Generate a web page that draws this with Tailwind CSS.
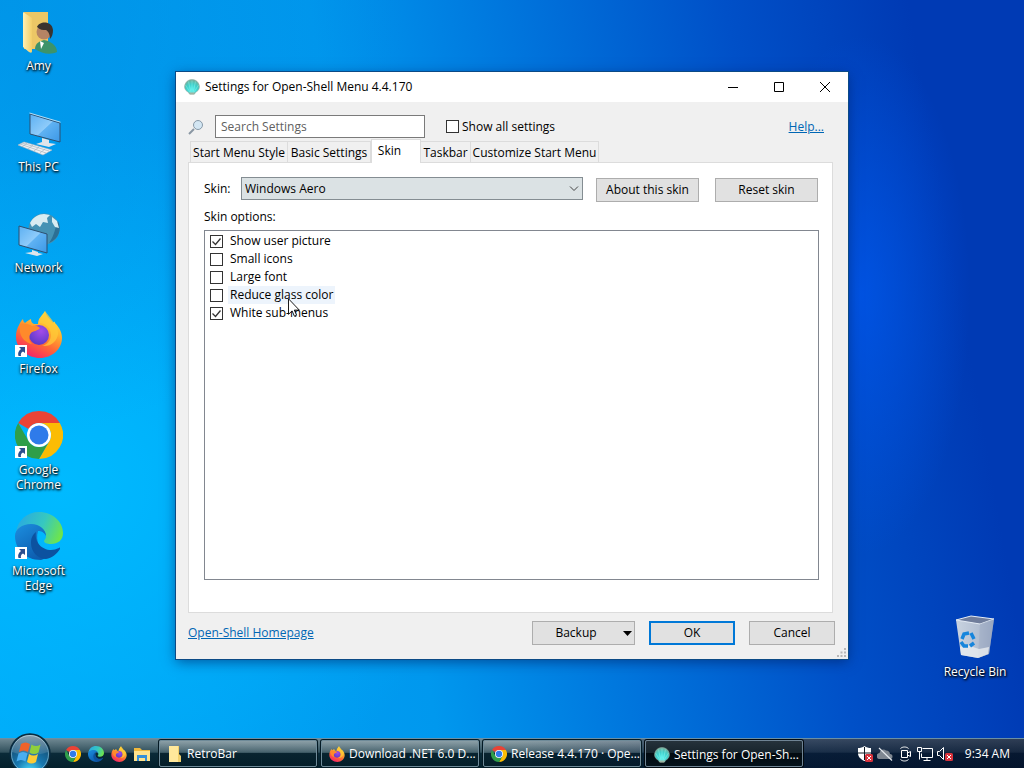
<!DOCTYPE html>
<html lang="en">
<head>
    <meta charset="UTF-8">
    <meta name="viewport" content="width=device-width, initial-scale=1.0">
    <title>Settings for Open-Shell Menu</title>
    <script src="https://cdn.jsdelivr.net/npm/@tailwindcss/browser@4"></script>
</head>
<body class="h-screen flex flex-col overflow-hidden font-['Open_Sans','Noto_Sans',sans-serif] text-[12px] leading-4 text-black">

    <!-- Shared icons -->
    <svg class="absolute size-0" aria-hidden="true">
        <defs>
            <linearGradient id="ffBody" x1=".8" y1="0" x2=".3" y2="1"><stop offset="0" stop-color="#fff04a"/><stop offset=".35" stop-color="#ffb52e"/><stop offset=".65" stop-color="#ff6a35"/><stop offset="1" stop-color="#f5206a"/></linearGradient>
            <radialGradient id="ffCore" cx=".6" cy=".3" r=".8"><stop offset="0" stop-color="#a44bea"/><stop offset="1" stop-color="#5238c4"/></radialGradient>
            <linearGradient id="edgeTop" x1="0" y1=".3" x2="1" y2=".6"><stop offset="0" stop-color="#29a9e2"/><stop offset=".55" stop-color="#36c8c0"/><stop offset="1" stop-color="#6fe54a"/></linearGradient>
            <linearGradient id="edgeLeft" x1="0" y1="0" x2=".6" y2="1"><stop offset="0" stop-color="#1c8fe0"/><stop offset="1" stop-color="#0d5cae"/></linearGradient>
            <linearGradient id="screen" x1="0" y1="0" x2="1" y2="1"><stop offset="0" stop-color="#5cb0f2"/><stop offset=".5" stop-color="#8ecbfa"/><stop offset=".52" stop-color="#5fb2f3"/><stop offset="1" stop-color="#3c98e6"/></linearGradient>
            <linearGradient id="folder" x1="0" y1="0" x2="1" y2="0"><stop offset="0" stop-color="#fff0b4"/><stop offset="1" stop-color="#f3ce67"/></linearGradient>
            <radialGradient id="shellFill" cx=".5" cy=".7" r=".65"><stop offset="0" stop-color="#4ff0ee"/><stop offset=".6" stop-color="#3fcfca"/><stop offset="1" stop-color="#6fb5a2"/></radialGradient>
            <radialGradient id="orb" cx=".5" cy=".95" r=".9"><stop offset="0" stop-color="#4fe0ff"/><stop offset=".4" stop-color="#1878b0"/><stop offset="1" stop-color="#123f5e"/></radialGradient>
            <linearGradient id="gloss" x1="0" y1="0" x2="0" y2="1"><stop offset="0" stop-color="#fff" stop-opacity=".85"/><stop offset="1" stop-color="#fff" stop-opacity=".15"/></linearGradient>
            <linearGradient id="bin" x1="0" y1="0" x2="1" y2="0"><stop offset="0" stop-color="#c9d3e0"/><stop offset=".6" stop-color="#b3bfd2"/><stop offset="1" stop-color="#8e9dba"/></linearGradient>
        </defs>
        <symbol id="chrome" viewBox="0 0 48 48">
            <path fill="#ea4335" d="M24 0A24 24 0 0 1 44.800 12H24a12 12 0 0 0-10.400 6L3.200 12A24 24 0 0 1 24 0z"/>
            <path fill="#fbbc04" d="M44.800 12A24 24 0 0 1 24 48l10.400-18A12 12 0 0 0 34.400 18 12 12 0 0 0 24 12z"/>
            <path fill="#2f9e4a" d="M24 48A24 24 0 0 1 3.200 12l10.400 18A12 12 0 0 0 24 36a12 12 0 0 0 10.400-6z"/>
            <circle cx="24" cy="24" r="12" fill="#fff"/><circle cx="24" cy="24" r="9.500" fill="#2f7bea"/>
        </symbol>
        <symbol id="firefox" viewBox="0 0 48 48">
            <path fill="url(#ffBody)" d="M30 1c1 5 5 8 8 12 1-2 2-1 2 0 4 4 7 9 7 15 0 11-10 20-22 20S1 39 1 27c0-7 2-10 4-14 1-2 2-3 3-4 0 2 1 3 2 4 2-2 4-3 6-4 0 3 1 4 3 5h4C23 8 27 6 30 1z"/>
            <path fill="#ffc938" d="M24 13c7 0 12 5 12 12 0 5-4 10-9 11 9 1 15-5 16-12C44 17 36 9 30 1c-1 5-5 7-6 12z" opacity=".75"/>
            <circle cx="24" cy="25" r="10" fill="url(#ffCore)"/>
            <path fill="#ff8a2b" d="M5 14c4-1 9 0 12 2 3-1 6 0 8 2-2 3-7 3-9 5-3 4-2 8 1 11-6-1-11-6-12-12z"/>
        </symbol>
        <symbol id="edge" viewBox="0 0 48 48">
            <path fill="url(#edgeTop)" d="M1 20C3 8 12 0 24 0c14 0 24 10 24 21 0 7-5 11-12 11-4 0-7-1-7-3 0-1 2-2 2-5 0-6-6-10-13-10C10 14 4 16 1 20z"/>
            <path fill="url(#edgeLeft)" d="M0 24c0-7 7-12 16-12 9 0 15 6 15 12-2-4-5-5-8-5-3 10 2 20 10 25-2 2-4 3-7 4C10 48 0 37 0 24z"/>
            <path fill="#0c52a0" d="M21 20c-4 3-5 7-5 11 0 9 7 16 15 16 6-1 11-5 14-10 0-1 0-2-1-1-3 1-5 2-8 2-9 0-17-8-15-18z"/>
        </symbol>
        <symbol id="shell" viewBox="0 0 16 16">
            <path fill="url(#shellFill)" stroke="#93aaa0" stroke-width=".6" d="M8 .6c3 0 5 1.400 6.300 3.400 1.600 2.600 1.500 5.500-.3 7.500l-2.500 2-1 1.500h-5l-1-1.500-2.500-2C.2 9.500.1 6.600 1.700 4 3 2 5 .6 8 .6z"/>
            <path fill="none" stroke="#a5f5ea" stroke-width=".4" d="M8 14V1.500M7 14L4.500 2.500M9 14l2.500-11.500M6.500 14L1.500 6M9.500 14l5-8"/>
            <path fill="#9fb5a4" d="M5 13.500h6l-.8 1.900H5.800z"/>
        </symbol>
        <symbol id="shortcut" viewBox="0 0 12 12">
            <path fill="#fff" d="M0 0h12v12H0z"/><path fill="#2c4f8f" d="M4 2h6v6L8 6.500C6 7.500 5.500 9 6 11H3.500C2.500 8 3.500 6 6 4z"/>
        </symbol>
    </svg>

    <main class="relative flex-1 flex justify-between text-white bg-[radial-gradient(ellipse_110px_260px_at_84%_40%,#0058f0b3,transparent),radial-gradient(ellipse_40%_60%_at_0%_0%,#0088dc80,transparent),radial-gradient(ellipse_40%_50%_at_6%_66%,#00baff,transparent),linear-gradient(80deg,#00a8f8_0%,#0098ee_38%,#0074dc_56%,#0050c8_74%,#003ab4_90%)]">

        <!-- Desktop icons -->
        <nav class="flex flex-col [text-shadow:1px_1px_2px_#000,0_1px_3px_#000]">
            <a href="#" class="flex h-[101px] w-[77px] flex-col items-center gap-[3px] pt-[7px] text-center leading-[15px]">
                <svg class="size-12" viewBox="0 0 48 48">
                    <path fill="#ecc766" d="M9 5h24v37H9z"/><path fill="url(#folder)" d="M8 5l9 6v33c0 2-1 2-3 1l-6-5z"/>
                    <path fill="#3d936a" d="M20 42c0-6 5-8 9-9 6 1 13 5 13 12-6 3-15 2-22-3z"/><path fill="#fff" d="M25 34l4 2-3 6z"/>
                    <circle cx="29" cy="25" r="7.500" fill="#b58464"/><path fill="#3a332f" d="M22 20c2-6 15-7 16 3 0 4-1 7-3 9 0-5-2-8-4-9-3 0-6 0-9-3z"/>
                </svg>
                <span>Amy</span>
            </a>
            <a href="#" class="flex h-[101px] w-[77px] flex-col items-center gap-[3px] pt-[7px] text-center leading-[15px]">
                <svg class="size-12" viewBox="0 0 48 48">
                    <path fill="url(#screen)" stroke="#2d4f70" d="M15 6l30 9v19L15 26z"/><path fill="none" stroke="#e4eff7" stroke-width=".8" d="M14.500 5l31 9.200"/>
                    <path fill="#dfe5ea" d="M27 30l7 2v3l7 1-7 3-13-3 6-2z"/><path fill="#eef2f5" stroke="#aab4be" stroke-width=".6" d="M9 34l28 8-9 5L3 37z"/>
                    <path fill="none" stroke="#a8b3bd" stroke-width=".7" d="M7 35l27 8M5 36l26 9M12 35l-5 4M18 37l-5 4M24 39l-5 4M30 41l-5 4"/>
                </svg>
                <span>This PC</span>
            </a>
            <a href="#" class="flex h-[101px] w-[77px] flex-col items-center gap-[3px] pt-[7px] text-center leading-[15px]">
                <svg class="size-12" viewBox="0 0 48 48">
                    <circle cx="29" cy="20" r="15.500" fill="#4592b4"/><path fill="#2c6f94" d="M34 34c10-4 13-14 9-22-3 6-3 14-9 22z"/>
                    <path fill="#d8ecf2" d="M15 14c3-6 9-9 14-9l6 1-3 3 1 5-5-1-3 5-4-3-4 3zM37 8l5 4 2 7-4-1-3-5z"/>
                    <path fill="url(#screen)" stroke="#2d4f70" d="M4 17l28 8v19L4 36z"/><path fill="#dfe5ea" d="M17 41l6 2v1l5 1-6 2-12-3 7-1z"/>
                </svg>
                <span>Network</span>
            </a>
            <a href="#" class="relative flex h-[101px] w-[77px] flex-col items-center gap-[3px] pt-[7px] text-center leading-[15px]">
                <svg class="size-12"><use href="#firefox"/></svg>
                <svg class="absolute left-[15px] top-[42px] size-3"><use href="#shortcut"/></svg>
                <span>Firefox</span>
            </a>
            <a href="#" class="relative flex h-[101px] w-[77px] flex-col items-center gap-[3px] pt-[7px] text-center leading-[15px]">
                <svg class="size-12"><use href="#chrome"/></svg>
                <svg class="absolute left-[15px] top-[42px] size-3"><use href="#shortcut"/></svg>
                <span>Google Chrome</span>
            </a>
            <a href="#" class="relative flex h-[101px] w-[77px] flex-col items-center gap-[3px] pt-[7px] text-center leading-[15px]">
                <svg class="size-12"><use href="#edge"/></svg>
                <svg class="absolute left-[15px] top-[42px] size-3"><use href="#shortcut"/></svg>
                <span>Microsoft Edge</span>
            </a>
        </nav>

        <a href="#" class="mr-[11px] mb-[31px] flex h-[101px] w-[76px] flex-col items-center gap-[3px] self-end whitespace-nowrap pt-[7px] text-center leading-[15px] [text-shadow:1px_1px_2px_#000,0_1px_3px_#000]">
            <svg class="size-12" viewBox="0 0 48 48">
                <path fill="url(#bin)" d="M5 7l24 3 14-4-5 35-11 4-17-3z"/><path fill="#707d9b" stroke="#e6edf6" d="M5 7l15-4 23 3-14 5z"/>
                <path fill="#a0adc4" d="M29 11l14-5-5 35-11 4z" opacity=".6"/><path fill="#e8ecf0" d="M9 34l7-2 12 4 10-2-1 7-10 4-17-3z" opacity=".8"/>
                <path fill="none" stroke="#1685dc" stroke-width="3.500" d="M11 26l2-5 5-1M20 20l3 6M10 29l3 4h4M19 33l4-3"/>
            </svg>
            <span>Recycle Bin</span>
        </a>

        <!-- Settings window -->
        <section class="absolute inset-x-[176px] top-[72px] bottom-[79px] flex flex-col bg-[#f0f0f0] text-black shadow-[0_0_0_1px_#0b4a86,0_3px_12px_#00206099]">
            <header class="flex h-[30px] items-center gap-[5px] bg-white pl-2">
                <svg class="size-4"><use href="#shell"/></svg>
                <h1 class="flex-1">Settings for Open-Shell Menu 4.4.170</h1>
                <button type="button" aria-label="Minimize" class="grid h-full w-[46px] place-items-center"><svg class="size-3" viewBox="0 0 12 12"><path stroke="#000" d="M1 6.500h10"/></svg></button>
                <button type="button" aria-label="Maximize" class="-ml-[5px] grid h-full w-[46px] place-items-center"><svg class="size-3" viewBox="0 0 12 12"><path fill="none" stroke="#000" d="M1.500 1.500h9v9h-9z"/></svg></button>
                <button type="button" aria-label="Close" class="-ml-[5px] grid h-full w-[46px] place-items-center"><svg class="size-3" viewBox="0 0 12 12"><path stroke="#000" d="M1 1l10 10M11 1L1 11"/></svg></button>
            </header>

            <form class="flex flex-1 flex-col px-3 pt-[13px]">
                <div class="flex h-[23px] items-center">
                    <svg class="size-4" viewBox="0 0 16 16"><path stroke="#8a97a3" stroke-width="2" d="M1 15l5-5"/><circle cx="10" cy="6" r="4.500" fill="#d3e6f3" stroke="#8799a8"/></svg>
                    <input type="text" aria-label="Search Settings" placeholder="Search Settings" class="ml-[11px] h-[23px] w-[210px] border border-[#7a7a7a] bg-white px-[5px] outline-none placeholder:text-[#606060]">
                    <label class="ml-[21px] flex items-center gap-[3px]">
                        <input type="checkbox" class="size-[13px] appearance-none border border-[#333] bg-white checked:bg-[#333]">
                        Show all settings
                    </label>
                    <a href="#" class="mr-3 ml-auto text-[#0066b4] underline">Help...</a>
                </div>

                <div class="mt-[2px] flex h-[22px] items-end pl-[2px]" role="tablist">
                    <button type="button" role="tab" class="h-[21px] w-[98px] whitespace-nowrap border border-b-0 border-[#dcdcdc] pt-px">Start Menu Style</button>
                    <button type="button" role="tab" class="h-[21px] w-[83px] whitespace-nowrap border border-b-0 border-l-0 border-[#dcdcdc] pt-px">Basic Settings</button>
                    <button type="button" role="tab" aria-selected="true" class="z-10 -mb-px h-6 w-[50px] border border-b-0 border-[#dcdcdc] bg-white pr-[13px] pb-px">Skin</button>
                    <button type="button" role="tab" class="h-[21px] w-[50px] whitespace-nowrap border border-b-0 border-l-0 border-[#dcdcdc] pt-px">Taskbar</button>
                    <button type="button" role="tab" class="h-[21px] w-[128px] whitespace-nowrap border border-b-0 border-l-0 border-[#dcdcdc] pt-px">Customize Start Menu</button>
                </div>

                <div class="mr-[3px] flex flex-1 flex-col border border-[#dcdcdc] bg-white px-[14px] pt-[14px] pb-8">
                    <div class="flex h-[25px] items-start pl-px">
                        <label for="skin" class="w-[37px] leading-6">Skin:</label>
                        <div class="relative mr-[13px] flex-1">
                            <select id="skin" class="block h-[23px] w-full appearance-none border border-[#848d92] bg-[#dbe2e4] px-[3px]">
                                <option>Windows Aero</option>
                            </select>
                            <svg class="pointer-events-none absolute top-2 right-1 h-2 w-[10px]" viewBox="0 0 10 8"><path fill="none" stroke="#444" d="M1 1.500l4 4 4-4"/></svg>
                        </div>
                        <button type="button" class="mt-px mr-4 h-6 w-[103px] border border-[#adadad] bg-[#e1e1e1]">About this skin</button>
                        <button type="button" class="mt-px h-6 w-[103px] border border-[#adadad] bg-[#e1e1e1]">Reset skin</button>
                    </div>
                    <h2 class="mt-[7px] mb-[5px] pl-px">Skin options:</h2>
                    <div class="ml-px -mr-px flex-1 border border-[#828790] bg-white py-px pl-[5px]">
                        <label class="flex h-[18px] items-center">
                            <span class="relative size-[13px]"><input type="checkbox" checked class="peer block size-[13px] appearance-none border border-[#333] bg-white"><svg class="pointer-events-none absolute inset-0 hidden size-[13px] peer-checked:block" viewBox="0 0 13 13"><path fill="none" stroke="#333" stroke-width="1.300" d="M2.500 6.500l3 3 5-6"/></svg></span>
                            <span class="ml-[5px] px-[2px]">Show user picture</span>
                        </label>
                        <label class="flex h-[18px] items-center">
                            <span class="relative size-[13px]"><input type="checkbox" class="peer block size-[13px] appearance-none border border-[#333] bg-white"><svg class="pointer-events-none absolute inset-0 hidden size-[13px] peer-checked:block" viewBox="0 0 13 13"><path fill="none" stroke="#333" stroke-width="1.300" d="M2.500 6.500l3 3 5-6"/></svg></span>
                            <span class="ml-[5px] px-[2px]">Small icons</span>
                        </label>
                        <label class="flex h-[18px] items-center">
                            <span class="relative size-[13px]"><input type="checkbox" class="peer block size-[13px] appearance-none border border-[#333] bg-white"><svg class="pointer-events-none absolute inset-0 hidden size-[13px] peer-checked:block" viewBox="0 0 13 13"><path fill="none" stroke="#333" stroke-width="1.300" d="M2.500 6.500l3 3 5-6"/></svg></span>
                            <span class="ml-[5px] px-[2px]">Large font</span>
                        </label>
                        <label class="flex h-[18px] items-center">
                            <span class="relative size-[13px]"><input type="checkbox" class="peer block size-[13px] appearance-none border border-[#333] bg-white"><svg class="pointer-events-none absolute inset-0 hidden size-[13px] peer-checked:block" viewBox="0 0 13 13"><path fill="none" stroke="#333" stroke-width="1.300" d="M2.500 6.500l3 3 5-6"/></svg></span>
                            <span class="ml-[5px] bg-[#edf4fc] px-[2px] py-px">Reduce glass color</span>
                        </label>
                        <label class="flex h-[18px] items-center">
                            <span class="relative size-[13px]"><input type="checkbox" checked class="peer block size-[13px] appearance-none border border-[#333] bg-white"><svg class="pointer-events-none absolute inset-0 hidden size-[13px] peer-checked:block" viewBox="0 0 13 13"><path fill="none" stroke="#333" stroke-width="1.300" d="M2.500 6.500l3 3 5-6"/></svg></span>
                            <span class="ml-[5px] px-[2px]">White sub-menus</span>
                        </label>
                    </div>
                </div>

                <footer class="flex items-center gap-[14px] pt-2 pr-px pb-[14px]">
                    <a href="#" class="mr-auto text-[#0066b4] underline">Open-Shell Homepage</a>
                    <button type="button" class="flex h-6 w-[103px] items-center border border-[#adadad] bg-[#e1e1e1] pr-[2px]">
                        <span class="flex-1 pr-1">Backup</span>
                        <svg class="h-[5px] w-[9px]" viewBox="0 0 9 5"><path d="M0 0h9L4.500 5z"/></svg>
                    </button>
                    <button type="submit" class="h-6 w-[86px] border-2 border-[#0078d7] bg-[#e1e1e1]">OK</button>
                    <button type="button" class="h-6 w-[86px] border border-[#adadad] bg-[#e1e1e1]">Cancel</button>
                </footer>
            </form>
            <svg class="absolute right-[2px] bottom-[2px] size-[9px] fill-[#b8b8b8]" viewBox="0 0 9 9"><path d="M7 0h2v2H7zM7 3.500h2v2H7zM7 7h2v2H7zM3.500 3.500h2v2h-2zM3.500 7h2v2h-2zM0 7h2v2H0z"/></svg>
        </section>

        <!-- Mouse pointer -->
        <svg class="absolute top-[298px] left-[288px] h-[19px] w-3" viewBox="0 0 12 19"><path fill="#fff" stroke="#000" stroke-width=".9" d="M.5.8v15.500l3.600-3.400 2.300 5.300 2.200-1-2.300-5.100h5z"/></svg>
    </main>

    <!-- Taskbar -->
    <footer class="relative flex h-[30px] items-center border-t border-[#6a8fa4] bg-[linear-gradient(#6e8791,#31505c_45%,#0a2a38_50%,#04202c)] pl-[9px] text-white">
        <div class="absolute inset-0 bg-[linear-gradient(90deg,transparent_50%,#06123a80_75%,#040c2c99)]"></div>
        <button type="button" aria-label="Start" class="relative size-[42px] shrink-0">
            <svg class="size-[42px]" viewBox="0 0 42 42">
                <circle cx="21" cy="21" r="20" fill="url(#orb)" stroke="#0a2b3e" stroke-width="1.500"/><circle cx="21" cy="21" r="18.500" fill="none" stroke="#9ac6d8" stroke-opacity=".6"/>
                <path fill="url(#gloss)" d="M3 19C4 8 12 2 21 2s17 6 18 17c-10 4-26 4-36 0z" opacity=".6"/>
                <path fill="#f0622a" d="M12 11c3-2 6-2 9 0l-2 8c-3-2-6-2-9 0z"/><path fill="#8fcf3c" d="M22.500 11.500c3 2 6 2 9 0l-2 8c-3 2-6 2-9 0z"/>
                <path fill="#4aaef0" d="M9.500 20.500c3-2 6-2 9 0l-2 8c-3-2-6-2-9 0z"/><path fill="#fdcb35" d="M20 21c3 2 6 2 9 0l-2 8c-3 2-6 2-9 0z"/>
            </svg>
        </button>
        <div class="relative ml-[14px] flex gap-[7px]">
            <a href="#" aria-label="Chrome"><svg class="size-4"><use href="#chrome"/></svg></a>
            <a href="#" aria-label="Edge"><svg class="size-4"><use href="#edge"/></svg></a>
            <a href="#" aria-label="Firefox"><svg class="size-4"><use href="#firefox"/></svg></a>
            <a href="#" aria-label="File Explorer"><svg class="size-4" viewBox="0 0 16 16"><path fill="#f0b93d" d="M0 2h6l2 2h8v11H0z"/><path fill="#ffe38c" d="M0 5h16v10H0z"/><path fill="#3590d8" d="M3 15V9h10v6h-2v-3H5v3z"/></svg></a>
        </div>
        <div class="relative ml-[9px] flex gap-1">
            <button type="button" class="flex h-[27px] w-[158px] items-center gap-1 rounded-[2px] border border-[#6f8b99] bg-[linear-gradient(#ffffff40,#ffffff1a_48%,#00000026_50%,#0000001a)] pl-[7px] shadow-[0_0_0_1px_#041a24]">
                <svg class="size-4 shrink-0" viewBox="0 0 16 16"><path fill="#f1d06c" d="M2 0h10v8l2 2v6H2z"/><path fill="#ffe89b" d="M2 0h9v16H2z"/></svg>
                <span>RetroBar</span>
            </button>
            <button type="button" class="flex h-[27px] w-[158px] items-center gap-1 rounded-[2px] border border-[#6f8b99] bg-[linear-gradient(#ffffff40,#ffffff1a_48%,#00000026_50%,#0000001a)] pl-[7px] shadow-[0_0_0_1px_#041a24]">
                <svg class="size-4 shrink-0"><use href="#firefox"/></svg>
                <span class="whitespace-nowrap">Download .NET 6.0 D...</span>
            </button>
            <button type="button" class="flex h-[27px] w-[158px] items-center gap-1 rounded-[2px] border border-[#6f8b99] bg-[linear-gradient(#ffffff40,#ffffff1a_48%,#00000026_50%,#0000001a)] pl-[7px] shadow-[0_0_0_1px_#041a24]">
                <svg class="size-4 shrink-0"><use href="#chrome"/></svg>
                <span class="whitespace-nowrap">Release 4.4.170 · Ope...</span>
            </button>
            <button type="button" class="flex h-[27px] w-[158px] items-center gap-1 rounded-[2px] border border-[#6f8494] bg-[linear-gradient(#25323b,#17242c_48%,#020a10_50%,#04121b)] pt-[2px] pl-2 shadow-[0_0_0_1px_#020a10]">
                <svg class="size-4 shrink-0"><use href="#shell"/></svg>
                <span class="whitespace-nowrap">Settings for Open-Sh...</span>
            </button>
        </div>
        <div class="relative mr-[14px] ml-auto flex items-center gap-1">
            <svg class="size-4" viewBox="0 0 16 16"><path fill="#fff" d="M7.500 0c2 1.500 4 2 6.500 2v5c0 4-3 6.500-6.500 8C4 13.500 1 11 1 7V2c2.500 0 4.500-.5 6.500-2z"/><path stroke="#101a24" d="M7.500 1v13M1 7h13"/><rect x="8" y="8" width="8" height="8" rx="1.500" fill="#d8323c"/><path stroke="#fff" d="M10 10l4 4M14 10l-4 4"/></svg>
            <svg class="size-4" viewBox="0 0 16 16"><path fill="#7f8791" d="M3 13a3 3 0 0 1-.5-6A4 4 0 0 1 9 4.500 4 4 0 0 1 13 8a2.500 2.500 0 0 1 0 5z"/><path stroke="#e4e8ec" stroke-width="1.200" d="M2 2l13 12.500"/></svg>
            <svg class="size-4" viewBox="0 0 16 16"><path fill="none" stroke="#fff" d="M4.500 4.500h6v7h-6zM10.500 7l3-1.500v5l-3-1.500M3.500 2.500c2-2 6-2 8 0M3.500 13.500c2 2 6 2 8 0"/></svg>
            <svg class="size-4" viewBox="0 0 16 16"><path fill="none" stroke="#fff" d="M5.500 2.500h10v9H4.500v-4M10 11.500v3M6.500 14.500h7M.5 1.500h4v4h-4zM2.500 5.500v8"/></svg>
            <svg class="size-4" viewBox="0 0 16 16"><path fill="none" stroke="#fff" d="M.5 5.500h2l4-4v12l-4-4h-2z"/><rect x="8" y="7" width="8" height="8" rx="1.500" fill="#d8323c"/><path stroke="#fff" d="M10 9l4 4M14 9l-4 4"/></svg>
            <time class="ml-2">9:34 AM</time>
        </div>
    </footer>
</body>
</html>
